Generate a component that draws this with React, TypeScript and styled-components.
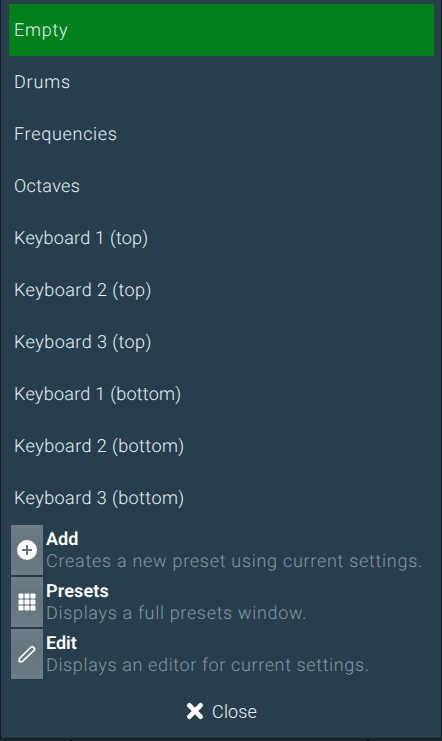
import React from 'react';
import styled, { createGlobalStyle } from 'styled-components';

const GlobalStyle = createGlobalStyle`
  * { box-sizing: border-box; }
  body { margin: 0; background: #273f4c; overflow: hidden; }
`;

const Screen = styled.div`
  display: flex;
  flex-direction: column;
  width: 442px;
  height: 741px;
`;

const Panel = styled.main`
  display: flex;
  flex-direction: column;
  flex: 1;
  padding: 4px 7px 0 8px;
  background: #273f4c;
  border: solid #111e25;
  border-width: 0 1px 2px 1px;
  font-family: Roboto, sans-serif;
  font-size: 18px;
  font-weight: 300;
  color: #e7f2f6;
  text-rendering: geometricPrecision;
  white-space: nowrap;
`;

const BackdropEdge = styled.div`
  display: flex;
  gap: 2px;
  height: 1px;
  background: #05090b;
`;

const EdgeSegment = styled.div<{ $width: number }>`
  width: ${(p) => p.$width}px;
  background: #2b3136;
`;

const List = styled.ul`
  margin: 0;
  padding: 0;
  list-style: none;
`;

const PresetRow = styled.li<{ $selected: boolean; $tracking: number }>`
  height: 52px;
  padding: 1px 0 0 5px;
  line-height: 52px;
  letter-spacing: ${(p) => p.$tracking}px;
  background: ${(p) => (p.$selected ? '#00801a' : 'transparent')};
`;

const ActionRow = styled.div`
  display: flex;
  gap: 3px;
  height: 52px;
  padding: 1px 0 1px 2px;
`;

const IconTile = styled.div`
  display: flex;
  align-items: center;
  justify-content: center;
  flex: none;
  width: 32px;
  height: 50px;
  background: linear-gradient(#6d7c85, #65757e 50%, #6d7c85);
  color: #fff;
`;

const ActionText = styled.div`
  display: flex;
  flex-direction: column;
  padding-top: 3px;
`;

const Title = styled.span<{ $tracking: number }>`
  height: 22px;
  line-height: 23px;
  font-weight: 600;
  color: #fff;
  letter-spacing: ${(p) => p.$tracking}px;
`;

const Description = styled.span<{ $tracking: number }>`
  height: 22px;
  line-height: 23px;
  color: #8797a1;
  letter-spacing: ${(p) => p.$tracking}px;
`;

const CloseButton = styled.button`
  display: flex;
  align-items: center;
  justify-content: center;
  gap: 8px;
  height: 52px;
  margin-top: 4px;
  padding: 2px 0 0;
  border: 0;
  background: none;
  color: inherit;
  font: inherit;
  letter-spacing: 0.1px;
`;

const AddIcon = () => (
  <svg width="20" height="20" viewBox="0 0 20 20">
    <circle cx="10" cy="10" r="10" fill="currentColor" />
    <path d="M10 5v10M5 10h10" stroke="#65757e" strokeWidth="2" />
  </svg>
);

const GridIcon = () => (
  <svg width="18" height="18" viewBox="0 0 18 18" fill="currentColor">
    {[0.5, 6.5, 12.5].map((y) =>
      [0.5, 6.5, 12.5].map((x) => <rect key={`${x}-${y}`} x={x} y={y} width="5" height="5" rx="0.9" />),
    )}
  </svg>
);

const PencilIcon = () => (
  <svg width="18" height="18" viewBox="0 0 18 18" fill="none" stroke="currentColor" strokeWidth="1.6" strokeLinejoin="round">
    <path d="M1.4 13.6 12.8 2.2a1.8 1.8 0 0 1 2.5 0l.7.7a1.8 1.8 0 0 1 0 2.5L4.7 16.2Q4.2 16.7 3.5 16.7H2Q1.2 16.7 1.2 15.9V14.4Q1.2 13.9 1.4 13.6Z" />
  </svg>
);

const CrossIcon = () => (
  <svg width="18" height="18" viewBox="0 0 18 18" stroke="#fff" strokeWidth="4.8" strokeLinecap="round">
    <path d="M3.4 3.4 14.6 14.6M14.6 3.4 3.4 14.6" />
  </svg>
);

const presets = [
  { label: 'Empty', tracking: 0.75 },
  { label: 'Drums', tracking: 0.8 },
  { label: 'Frequencies', tracking: 0.7 },
  { label: 'Octaves', tracking: 0.35 },
  { label: 'Keyboard 1 (top)', tracking: 0.24 },
  { label: 'Keyboard 2 (top)', tracking: 0.45 },
  { label: 'Keyboard 3 (top)', tracking: 0.45 },
  { label: 'Keyboard 1 (bottom)', tracking: 0.26 },
  { label: 'Keyboard 2 (bottom)', tracking: 0.43 },
  { label: 'Keyboard 3 (bottom)', tracking: 0.43 },
];

const actions = [
  { title: 'Add', text: 'Creates a new preset using current settings.', icon: <AddIcon />, titleTracking: 0, tracking: 0.72 },
  { title: 'Presets', text: 'Displays a full presets window.', icon: <GridIcon />, titleTracking: 0.15, tracking: 0.67 },
  { title: 'Edit', text: 'Displays an editor for current settings.', icon: <PencilIcon />, titleTracking: 0, tracking: 0.63 },
];

export default function App() {
  return (
    <Screen>
      <GlobalStyle />
      <Panel>
        <List>
          {presets.map((preset, index) => (
            <PresetRow key={preset.label} $selected={index === 0} $tracking={preset.tracking}>
              {preset.label}
            </PresetRow>
          ))}
        </List>
        {actions.map((action) => (
          <ActionRow key={action.title}>
            <IconTile>{action.icon}</IconTile>
            <ActionText>
              <Title $tracking={action.titleTracking}>{action.title}</Title>
              <Description $tracking={action.tracking}>{action.text}</Description>
            </ActionText>
          </ActionRow>
        ))}
        <CloseButton>
          <CrossIcon />
          Close
        </CloseButton>
      </Panel>
      <BackdropEdge>
        <EdgeSegment $width={70} />
        <EdgeSegment $width={295} />
        <EdgeSegment $width={73} />
      </BackdropEdge>
    </Screen>
  );
}
